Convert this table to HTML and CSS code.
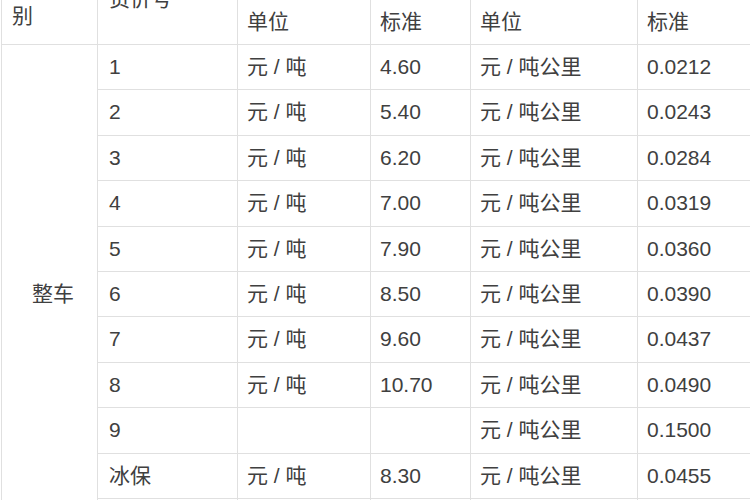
FILE: index.html
```html
<!DOCTYPE html>
<html lang="zh-CN">
<head>
<meta charset="utf-8">
<title>铁路货物运价率表</title>
<link rel="stylesheet" href="styles.css">
</head>
<body>
<table class="rate">
  <colgroup>
    <col class="c1"><col class="c2"><col class="c3"><col class="c4"><col class="c5"><col class="c6">
  </colgroup>
  <thead>
    <tr>
      <td rowspan="2" class="kind">办理类别</td>
      <td rowspan="2" class="num">货价号</td>
      <td colspan="2">基价1</td>
      <td colspan="2">基价2</td>
    </tr>
    <tr>
      <td>单位</td><td>标准</td><td>单位</td><td>标准</td>
    </tr>
  </thead>
  <tbody>
    <tr><td rowspan="11" class="group">整车</td><td class="num">1</td><td>元 / 吨</td><td>4.60</td><td>元 / 吨公里</td><td>0.0212</td></tr>
    <tr><td class="num">2</td><td>元 / 吨</td><td>5.40</td><td>元 / 吨公里</td><td>0.0243</td></tr>
    <tr><td class="num">3</td><td>元 / 吨</td><td>6.20</td><td>元 / 吨公里</td><td>0.0284</td></tr>
    <tr><td class="num">4</td><td>元 / 吨</td><td>7.00</td><td>元 / 吨公里</td><td>0.0319</td></tr>
    <tr><td class="num">5</td><td>元 / 吨</td><td>7.90</td><td>元 / 吨公里</td><td>0.0360</td></tr>
    <tr><td class="num">6</td><td>元 / 吨</td><td>8.50</td><td>元 / 吨公里</td><td>0.0390</td></tr>
    <tr><td class="num">7</td><td>元 / 吨</td><td>9.60</td><td>元 / 吨公里</td><td>0.0437</td></tr>
    <tr><td class="num">8</td><td>元 / 吨</td><td>10.70</td><td>元 / 吨公里</td><td>0.0490</td></tr>
    <tr><td class="num">9</td><td></td><td></td><td>元 / 吨公里</td><td>0.1500</td></tr>
    <tr><td class="num">冰保</td><td>元 / 吨</td><td>8.30</td><td>元 / 吨公里</td><td>0.0455</td></tr>
    <tr><td class="num">机械冷藏车</td><td>元 / 吨</td><td>11.20</td><td>元 / 吨公里</td><td>0.0650</td></tr>
  </tbody>
</table>
</body>
</html>
```

FILE: styles.css
```css
html, body {
  margin: 0;
  padding: 0;
  background: #ffffff;
  overflow: hidden;
}

body {
  width: 750px;
  height: 500px;
}

.rate {
  border-collapse: collapse;
  table-layout: fixed;
  width: 886px;
  margin-top: -46.8px;
  margin-left: 1px;
  font-family: "Liberation Sans", "Noto Sans CJK SC", sans-serif;
  font-size: 21px;
  color: #404040;
}

.c1 { width: 96px; }
.c2 { width: 140px; }
.c3 { width: 133px; }
.c4 { width: 100px; }
.c5 { width: 167px; }
.c6 { width: 250px; }

.rate td {
  border: 1px solid #e0e0e0;
  padding: 10px 11px 10px 9px;
  line-height: 24.4px;
  vertical-align: middle;
  text-align: left;
  white-space: nowrap;
}

.rate td.num {
  padding-left: 11px;
}

.rate td.kind {
  white-space: normal;
  line-height: 33px;
  padding-left: 10px;
}

.rate td.group {
  padding-left: 30px;
}
```
